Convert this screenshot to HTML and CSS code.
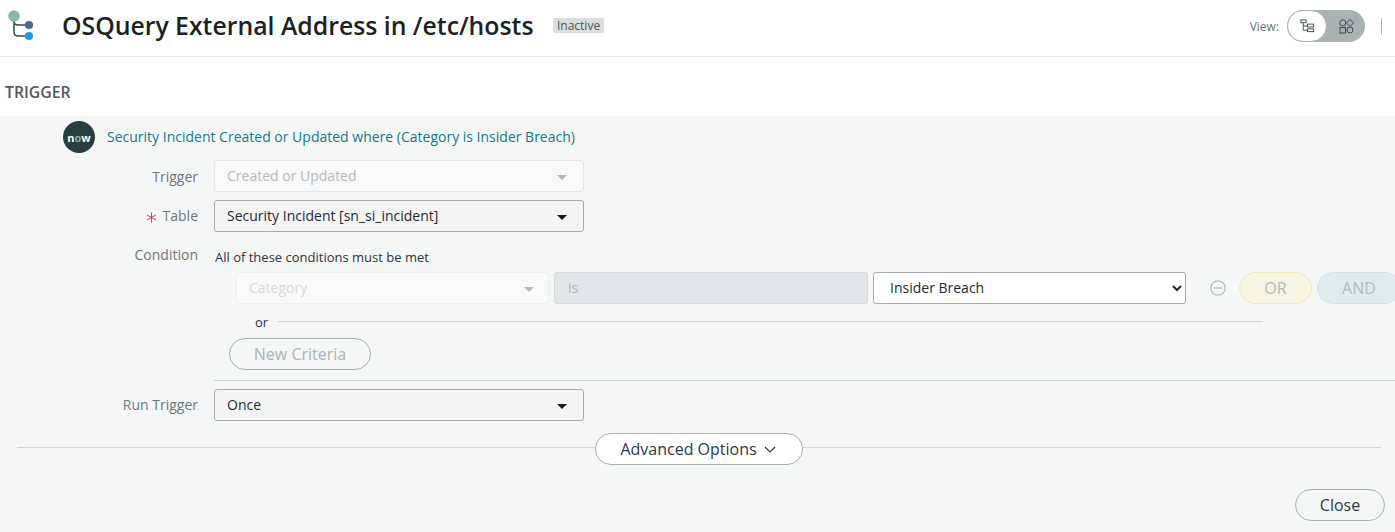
FILE: index.html
```html
<!DOCTYPE html>
<html lang="en">
<head>
<meta charset="utf-8">
<title>OSQuery External Address in /etc/hosts</title>
<link rel="stylesheet" href="styles.css">
</head>
<body>
<header class="topbar">
  <svg class="flow-logo" width="30" height="36" viewBox="0 0 30 36" aria-hidden="true">
    <path d="M7 10V24q0 4 4 4H20M7 13q0 4 4 4H20" fill="none" stroke="#36474f" stroke-width="1.500"/>
    <circle cx="7" cy="8" r="5.800" fill="#86b9a3"/>
    <circle cx="22" cy="17" r="4.100" fill="#4b6b88"/>
    <circle cx="22" cy="28" r="4.100" fill="#1f9ae5"/>
  </svg>
  <h1 class="title">OSQuery External Address in /etc/hosts</h1>
  <span class="badge">Inactive</span>
  <div class="view-area">
    <span class="view-label">View:</span>
    <div class="toggle">
      <span class="toggle-knob">
        <svg width="15" height="14" viewBox="0 0 16 14" fill="none" stroke="#3b4a52" stroke-width="1">
          <rect x="1" y="0.500" width="5.500" height="3"/>
          <path d="M3.500 3.500V11.500H8M3.500 7H8"/>
          <rect x="8" y="5" width="6.500" height="3"/>
          <rect x="8" y="10" width="6.500" height="3"/>
        </svg>
      </span>
      <span class="toggle-off">
        <svg width="15" height="15" viewBox="0 0 15 15" fill="none" stroke="#3b4a52" stroke-width="1">
          <circle cx="3.800" cy="3.800" r="3"/>
          <path d="M11 0.500l3.500 3.500-3.500 3.500-3.500-3.500z"/>
          <rect x="1" y="8.500" width="5.500" height="5.500"/>
          <circle cx="11" cy="11" r="3"/>
        </svg>
      </span>
    </div>
    <span class="view-sep"></span>
  </div>
</header>

<section class="section-head">
  <h2 class="section-title">TRIGGER</h2>
</section>

<main class="panel">
  <div class="source-row">
    <span class="now-logo">n<span class="now-o">o</span>w</span>
    <span class="source-text">Security Incident Created or Updated where (Category is Insider Breach)</span>
  </div>

  <div class="form-row row-trigger">
    <span class="field-label label-trigger">Trigger</span>
    <div class="picker picker-disabled"><span>Created or Updated</span><i class="caret"></i></div>
  </div>

  <div class="form-row row-table">
    <span class="field-label">
      <svg class="required" width="11" height="11" viewBox="0 0 11 11" fill="none" stroke="#d9413f" stroke-width="1" aria-hidden="true"><path d="M5.500 0.500v10M1 3l9 5M10 3l-9 5"/></svg>Table
    </span>
    <div class="picker"><span>Security Incident [sn_si_incident]</span><i class="caret"></i></div>
  </div>

  <div class="form-row row-condition">
    <span class="field-label">Condition</span>
    <span class="condition-note">All of these conditions must be met</span>
  </div>

  <div class="criteria">
    <div class="criteria-row">
      <div class="picker picker-faint"><span>Category</span><i class="caret"></i></div>
      <div class="operator">is</div>
      <select class="value-select"><option>Insider Breach</option></select>
      <svg class="remove" width="16" height="16" viewBox="0 0 16 16" fill="none" stroke="#b3b8ba" stroke-width="1.200">
        <circle cx="8" cy="8" r="7.200"/>
        <path d="M4 8h8"/>
      </svg>
      <span class="pill pill-or">OR</span>
      <span class="pill pill-and">AND</span>
    </div>
    <div class="or-row"><span class="or-text">or</span><span class="or-line"></span></div>
    <button class="btn new-criteria" type="button">New Criteria</button>
  </div>

  <div class="divider"></div>

  <div class="form-row row-run">
    <span class="field-label">Run Trigger</span>
    <div class="picker"><span>Once</span><i class="caret"></i></div>
  </div>

  <div class="advanced">
    <span class="adv-line"></span>
    <button class="btn adv-btn" type="button">Advanced Options
      <svg width="12" height="7" viewBox="0 0 12 7" fill="none" stroke="#2e3a40" stroke-width="1.100"><path d="M1 1l5 5 5-5"/></svg>
    </button>
    <span class="adv-line"></span>
  </div>

  <div class="footer">
    <button class="btn close-btn" type="button">Close</button>
  </div>
</main>
</body>
</html>
```
FILE: styles.css
```css
* { box-sizing: border-box; }
html, body { margin: 0; height: 532px; overflow: hidden; }
body {
  font-family: "Open Sans", "Liberation Sans", sans-serif;
  background: #fff;
  color: #1f2a30;
  display: flex;
  flex-direction: column;
}
.topbar {
  height: 57px;
  flex: none;
  display: flex;
  align-items: center;
  border-bottom: 1px solid #e3e5e6;
  padding-left: 7px;
  padding-bottom: 4px;
}
.flow-logo { flex: none; align-self: flex-start; margin-top: 8px; }
.title {
  margin: 0 0 2px 25px;
  font-size: 24.800px;
  font-weight: 600;
  color: #1a2226;
  white-space: nowrap;
}
.badge {
  margin: 0 0 2px 20px;
  background: #dcdedd;
  color: #4a5358;
  font-size: 12px;
  line-height: 15px;
  padding: 0 3.500px;
  border-radius: 2px;
}
.view-area { margin-left: auto; display: flex; align-items: center; padding-right: 13px; }
.view-label { font-size: 12px; color: #6b777c; margin-right: 8px; }
.toggle {
  width: 78px;
  height: 32px;
  border-radius: 16px;
  background: #a9b2b1;
  display: flex;
  align-items: center;
}
.toggle-knob {
  width: 40px;
  height: 32px;
  border-radius: 16px;
  background: #fff;
  border: 1px solid #a9b2b1;
  display: flex;
  align-items: center;
  justify-content: center;
}
.toggle-off { flex: 1; display: flex; align-items: center; justify-content: center; }
.view-sep { width: 1px; height: 16px; background: #a9b2b1; margin-left: 16px; }

.section-head { height: 59px; flex: none; padding: 24px 0 0 5px; }
.section-title { margin: 0; font-size: 15.800px; line-height: 22px; font-weight: 600; color: #52595d; }

.panel { flex: 1; background: #f5f7f6; min-height: 0; display: flex; flex-direction: column; }

.source-row { display: flex; align-items: center; height: 32px; margin: 5px 0 0 63px; }
.now-logo {
  width: 32px;
  height: 32px;
  border-radius: 50%;
  background: #293e40;
  color: #fff;
  font-size: 11px;
  font-weight: 700;
  display: flex;
  align-items: center;
  justify-content: center;
}
.now-o { color: #81b5a1; }
.source-text { margin-left: 12px; padding-bottom: 2px; font-size: 14px; color: #0f7a8a; white-space: nowrap; }

.form-row { display: flex; align-items: center; }
.field-label {
  width: 198px;
  flex: none;
  padding-bottom: 2px;
  text-align: right;
  font-size: 14px;
  color: #6b777c;
}
.label-trigger { padding-bottom: 0; }
.required { margin-right: 6px; vertical-align: -2px; }
.picker {
  flex: none;
  width: 370px;
  height: 32px;
  margin-left: 16px;
  padding: 0 16px 2px 12px;
  border: 1px solid #a5abad;
  border-radius: 3px;
  background: #f4f4f4;
  font-size: 14px;
  color: #1f2a30;
  display: flex;
  align-items: center;
  justify-content: space-between;
}
.caret {
  width: 0;
  height: 0;
  border-left: 5px solid transparent;
  border-right: 5px solid transparent;
  border-top: 5px solid #15191b;
  margin-top: 4px;
}
.picker-disabled { border-color: #e3e6e6; background: #f8f9f8; color: #b4b9bb; }
.picker-disabled .caret { border-top-color: #b4b9bb; }
.picker-faint { margin-left: 0; width: 313px; border-color: #eceeee; background: #f8f9f8; color: #d5d8d9; }
.picker-faint .caret { border-top-color: #b4b9bb; margin-right: -2px; }
.row-trigger { margin-top: 7px; }
.row-table { margin-top: 8px; }
.row-condition { margin-top: 14px; height: 18px; }
.condition-note { margin-left: 17px; font-size: 13px; color: #2a343a; position: relative; top: 2px; }

.criteria { margin: 8px 0 0 229px; }
.criteria-row { display: flex; align-items: center; padding-left: 7px; height: 32px; }
.operator {
  flex: none;
  width: 314px;
  height: 32px;
  margin-left: 5px;
  border: 1px solid #d6dadc;
  border-radius: 3px;
  background: #e3e6e8;
  color: #a9afb2;
  font-size: 14px;
  line-height: 29px;
  padding-left: 13px;
}
.value-select {
  flex: none;
  width: 313px;
  height: 32px;
  margin-left: 5px;
  padding: 0 0 2px 12px;
  border: 1px solid #a5abad;
  border-radius: 3px;
  background: #fff;
  font-family: inherit;
  font-size: 14px;
  color: #1f2a30;
}
.remove { flex: none; margin-left: 24px; }
.pill {
  flex: none;
  height: 32px;
  border-radius: 16px;
  font-size: 16px;
  line-height: 30px;
  text-align: center;
  color: #b4b9bb;
}
.pill-or { width: 73px; margin-left: 13px; background: #f6f5e2; border: 1px solid #efe9b8; }
.pill-and { width: 84px; margin-left: 5px; background: #dfebef; border: 1px solid #cfe3e9; }
.or-row { display: flex; align-items: center; width: 1034px; margin-top: 9px; height: 18px; }
.or-text { margin-left: 26px; font-size: 13px; color: #2a343a; }
.or-line { flex: 1; height: 1px; background: #cfd3d4; margin: -2px 0 0 10px; }
.btn {
  font-family: inherit;
  border: 1px solid #a9afb1;
  background: #fff;
  cursor: pointer;
  padding: 0;
}
.new-criteria {
  display: block;
  width: 142px;
  height: 32px;
  margin-top: 7px;
  border-radius: 16px;
  background: #f5f7f6;
  font-size: 16px;
  color: #aeb3b5;
}
.divider { height: 1px; background: #cfd3d4; margin: 10px 0 0 214px; }
.row-run { margin-top: 8px; }

.advanced { display: flex; align-items: center; margin: 12px 14px 0 17px; }
.adv-line { flex: 1; height: 1px; background: #cfd3d4; margin-bottom: 4px; }
.adv-btn {
  width: 208px;
  height: 32px;
  padding-right: 2px;
  border-radius: 16px;
  font-size: 16px;
  color: #2e3a40;
  display: flex;
  align-items: center;
  justify-content: center;
  gap: 7px;
}
.footer { display: flex; justify-content: flex-end; padding-right: 10px; margin-top: 24px; }
.close-btn {
  width: 90px;
  height: 32px;
  border-radius: 16px;
  background: #f5f7f6;
  font-size: 16px;
  color: #2e3a40;
}
```
